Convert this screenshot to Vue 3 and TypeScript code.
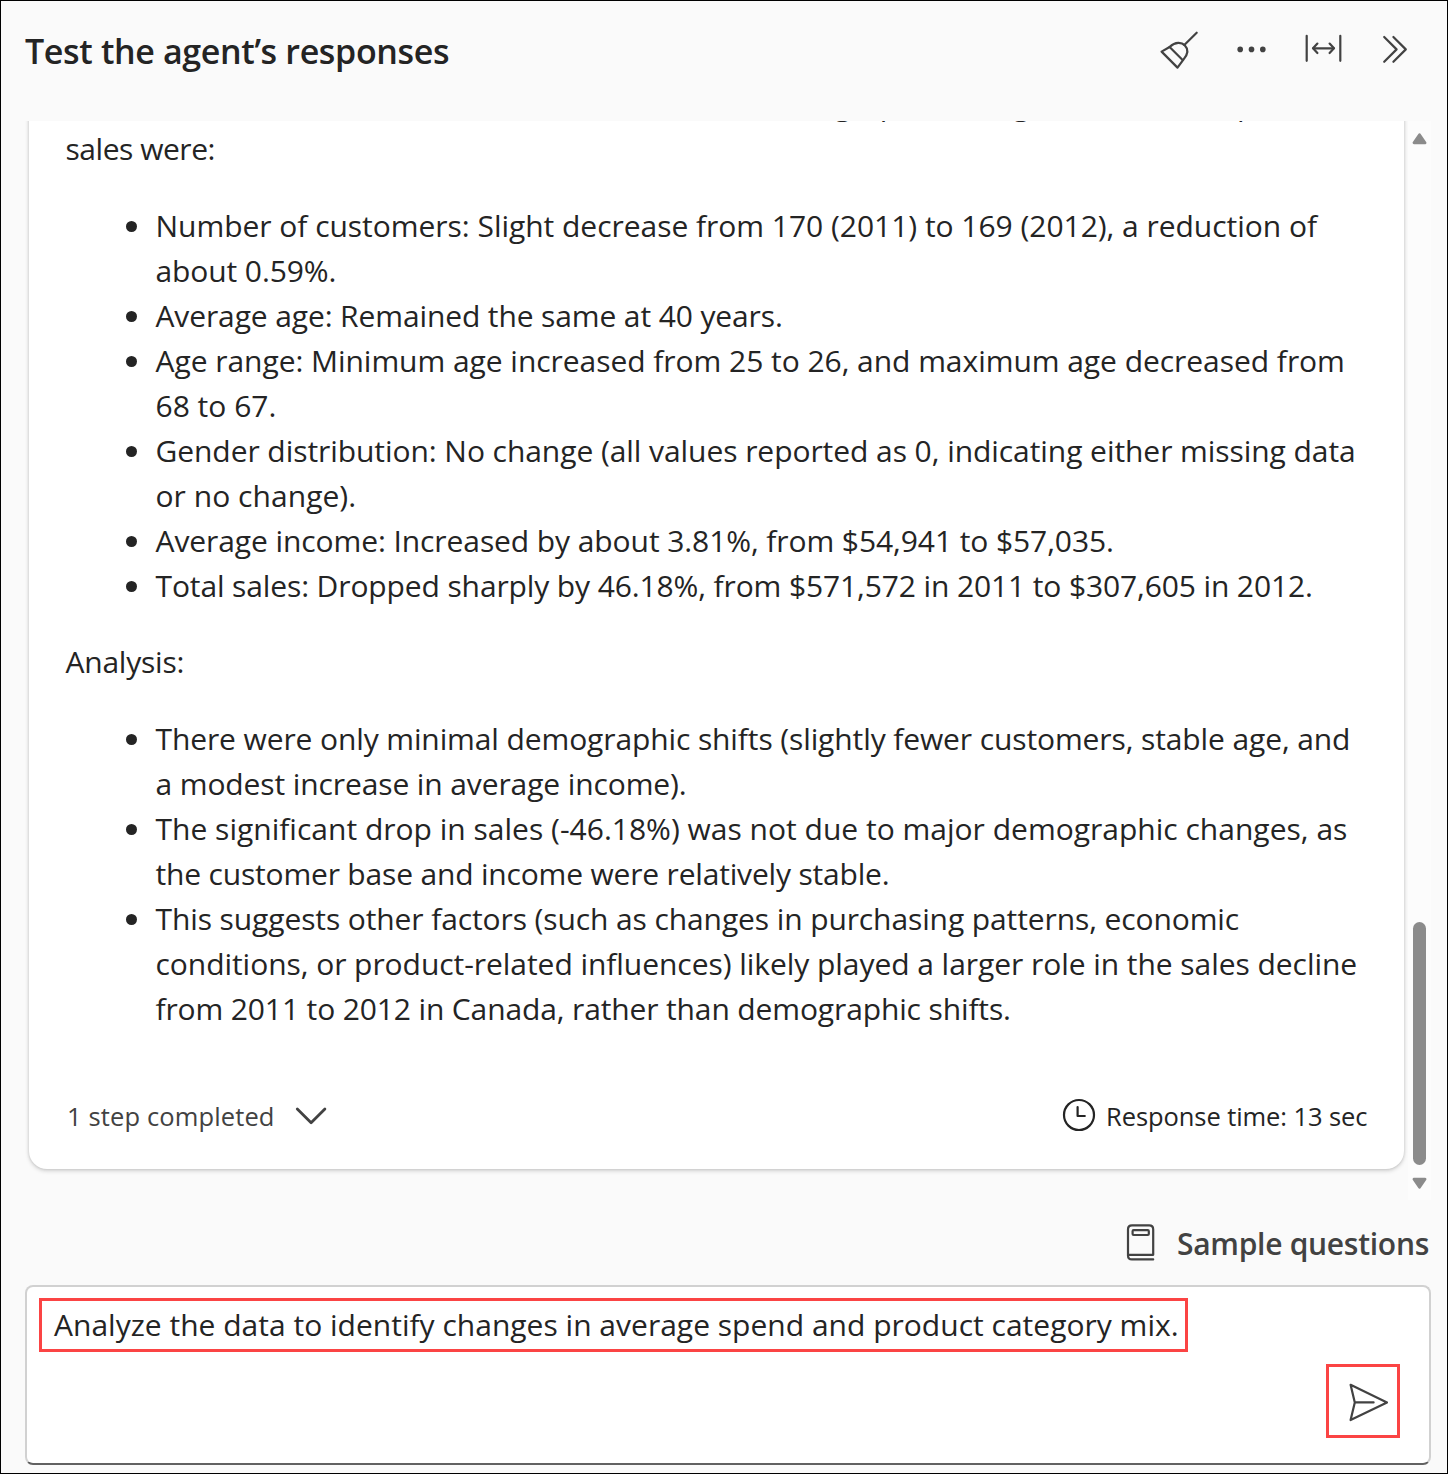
<script setup lang="ts">
interface Line {
  text: string
  spacing: number
}

type Item = Line[]

const intro: Line[] = [
  { text: 'Between 2011 and 2012 in Canada, the customer demographic changes and their impact on', spacing: -0.1 },
  { text: 'sales were:', spacing: -0.467 },
]

const findings: Item[] = [
  [
    { text: 'Number of customers: Slight decrease from 170 (2011) to 169 (2012), a reduction of', spacing: -0.03 },
    { text: 'about 0.59%.', spacing: -0.1 },
  ],
  [{ text: 'Average age: Remained the same at 40 years.', spacing: -0.118 }],
  [
    { text: 'Age range: Minimum age increased from 25 to 26, and maximum age decreased from', spacing: -0.045 },
    { text: '68 to 67.', spacing: 0.008 },
  ],
  [
    { text: 'Gender distribution: No change (all values reported as 0, indicating either missing data', spacing: -0.064 },
    { text: 'or no change).', spacing: 0.045 },
  ],
  [{ text: 'Average income: Increased by about 3.81%, from $54,941 to $57,035.', spacing: -0.085 }],
  [{ text: 'Total sales: Dropped sharply by 46.18%, from $571,572 in 2011 to $307,605 in 2012.', spacing: -0.119 }],
]

const analysis: Item[] = [
  [
    { text: 'There were only minimal demographic shifts (slightly fewer customers, stable age, and', spacing: -0.11 },
    { text: 'a modest increase in average income).', spacing: -0.11 },
  ],
  [
    { text: 'The significant drop in sales (-46.18%) was not due to major demographic changes, as', spacing: 0.007 },
    { text: 'the customer base and income were relatively stable.', spacing: -0.18 },
  ],
  [
    { text: 'This suggests other factors (such as changes in purchasing patterns, economic', spacing: -0.106 },
    { text: 'conditions, or product-related influences) likely played a larger role in the sales decline', spacing: -0.053 },
    { text: 'from 2011 to 2012 in Canada, rather than demographic shifts.', spacing: -0.13 },
  ],
]

const track = (line: Line) => ({ letterSpacing: `${line.spacing}px` })
</script>

<template>
  <main class="panel">
    <header class="header">
      <h1 class="title">Test the agent’s responses</h1>
      <div class="tools">
        <svg class="icon" width="42" height="42" viewBox="1158 29 42 42">
          <path d="M1196.7 32.7 L1184.3 45" />
          <path d="M1161.6 51.6 L1169.6 47 C1175.5 41.4 1181.6 42.2 1184.9 45.4 C1188.6 49.2 1188 54 1183.6 59.4 L1177.5 67.6 Z" />
          <path d="M1169.6 47 L1182.6 60" />
        </svg>
        <svg class="icon dots" width="42" height="42" viewBox="1230 29 42 42">
          <circle cx="1240.2" cy="49.4" r="2.8" />
          <circle cx="1251.5" cy="49.4" r="2.8" />
          <circle cx="1262.8" cy="49.4" r="2.8" />
        </svg>
        <svg class="icon" width="42" height="42" viewBox="1302 29 42 42">
          <path d="M1306.7 35.8 V60.8 M1340.3 35.8 V60.8 M1313.3 48.3 H1333.7" />
          <path d="M1317.4 43.6 L1313 48.3 L1317.4 53 M1329.6 43.6 L1334 48.3 L1329.6 53" />
        </svg>
        <svg class="icon" width="42" height="42" viewBox="1374 29 42 42">
          <path d="M1384.2 37 L1396.6 49.4 L1384.2 61.8 M1393.4 37 L1405.8 49.4 L1393.4 61.8" />
        </svg>
      </div>
    </header>

    <section class="viewport">
      <article class="card">
        <p class="para">
          <span v-for="line in intro" :key="line.text" class="line" :style="track(line)">{{ line.text }}</span>
        </p>
        <ul class="list">
          <li v-for="(item, i) in findings" :key="i" class="item">
            <span v-for="line in item" :key="line.text" class="line" :style="track(line)">{{ line.text }}</span>
          </li>
        </ul>
        <p class="para lead">Analysis:</p>
        <ul class="list">
          <li v-for="(item, i) in analysis" :key="i" class="item">
            <span v-for="line in item" :key="line.text" class="line" :style="track(line)">{{ line.text }}</span>
          </li>
        </ul>
        <footer class="meta">
          <button class="steps" type="button">
            <span>1 step completed</span>
            <svg width="32" height="20" viewBox="294.5 1106 32 20">
              <path d="M296.8 1109 L310.6 1122.8 L324.4 1109" />
            </svg>
          </button>
          <div class="timing">
            <svg width="34" height="34" viewBox="1062 1098 34 34">
              <circle cx="1079" cy="1115" r="15" />
              <path d="M1077.6 1107 V1116 H1084.8" />
            </svg>
            <span>Response time: 13 sec</span>
          </div>
        </footer>
      </article>
      <div class="scrollbar">
        <svg width="15" height="12" viewBox="0 0 15 12"><path d="M7.5 1.7 L13 9.8 H2 Z" /></svg>
        <div class="thumb"></div>
        <svg width="15" height="12" viewBox="0 0 15 12"><path d="M7.5 10.3 L13 2.2 H2 Z" /></svg>
      </div>
    </section>

    <div class="samples">
      <svg width="30" height="38" viewBox="1126 1223 30 38">
        <path d="M1153.2 1259.4 H1132 Q1128 1259.4 1128 1255.4 V1229.4 Q1128 1225.4 1132 1225.4 H1149.2 Q1153.2 1225.4 1153.2 1229.4 V1254.8 H1128" />
        <rect x="1132.6" y="1230.2" width="16.2" height="4.8" rx="1" />
      </svg>
      <span>Sample questions</span>
    </div>

    <div class="composer">
      <div class="prompt">Analyze the data to identify changes in average spend and product category mix.</div>
      <button class="send" type="button" aria-label="Send">
        <svg width="42" height="42" viewBox="1347 1382 42 42">
          <path d="M1350.6 1384.8 L1387 1402.4 L1350.6 1420 L1354.8 1402.4 Z M1354.8 1402.4 H1373.6" />
        </svg>
      </button>
    </div>
  </main>
</template>

<style>
body {
  margin: 0;
}
</style>

<style scoped>
.panel {
  box-sizing: border-box;
  width: 1448px;
  height: 1474px;
  border: 1px solid #000;
  background: #fafafa;
  color: #242424;
  font-family: "Open Sans", "Noto Sans", sans-serif;
  font-size: 30px;
  line-height: 45px;
  overflow: hidden;
  display: flex;
  flex-direction: column;
}

svg {
  display: block;
  flex: none;
  fill: none;
  stroke: #424242;
  stroke-width: 2.2;
  stroke-linecap: round;
  stroke-linejoin: round;
}

button {
  padding: 0;
  border: 0;
  background: none;
  font: inherit;
  color: inherit;
}

.header {
  flex: none;
  height: 120px;
  box-sizing: border-box;
  padding: 28px 31px 0 24px;
  display: flex;
  justify-content: space-between;
  align-items: flex-start;
}

.title {
  margin: 0;
  font-size: 34px;
  font-weight: 600;
  line-height: 45px;
  letter-spacing: -0.35px;
}

.tools {
  display: flex;
  gap: 30px;
}

.icon.dots {
  fill: #424242;
  stroke: none;
}

.viewport {
  flex: none;
  height: 1079px;
  padding-left: 28px;
  overflow: hidden;
  display: flex;
  align-items: flex-start;
}

.card {
  box-sizing: border-box;
  width: 1375px;
  height: 1088px;
  margin-top: -40px;
  padding: 0 36.5px;
  border-radius: 0 0 18px 18px;
  background: #fff;
  box-shadow: 0 2px 4px rgba(0, 0, 0, 0.16), 0 0 3px rgba(0, 0, 0, 0.14);
}

.para {
  margin: 0;
}

.para.lead {
  margin-top: 31px;
  letter-spacing: -0.226px;
}

.line {
  display: block;
  white-space: nowrap;
}

.list {
  list-style: none;
  margin: 32px 0 0;
  padding: 0 0 0 60.5px;
}

.item {
  display: grid;
  grid-template-columns: 29.5px auto;
  justify-content: start;
}

.item::before {
  content: "";
  width: 11px;
  height: 11px;
  margin-top: 18px;
  border-radius: 50%;
  background: #242424;
}

.item .line {
  grid-column: 2;
}

.meta {
  margin: 64px 0 0;
  height: 43px;
  display: flex;
  justify-content: space-between;
  align-items: center;
  font-size: 25.5px;
}

.steps {
  display: flex;
  align-items: center;
  gap: 20px;
  margin-left: 1.5px;
  color: #424242;
  letter-spacing: 0.13px;
}

.steps svg {
  margin-bottom: 2px;
  stroke-width: 2.8;
}

.timing {
  display: flex;
  align-items: center;
  gap: 10px;
  letter-spacing: -0.08px;
}

.timing svg {
  margin-bottom: 4px;
  stroke: #242424;
}

.scrollbar {
  box-sizing: border-box;
  width: 23px;
  height: 1079px;
  margin-left: 4px;
  padding: 12px 0 11px;
  background: #fcfcfc;
  display: flex;
  flex-direction: column;
  align-items: center;
}

.scrollbar svg {
  fill: #8b8b8b;
  stroke: #8b8b8b;
  stroke-width: 2.8;
}

.thumb {
  width: 13px;
  height: 243px;
  margin: auto 0 12px;
  border-radius: 7px;
  background: #8b8b8b;
}

.samples {
  flex: none;
  box-sizing: border-box;
  height: 85px;
  padding: 2px 18px 0 0;
  display: flex;
  justify-content: flex-end;
  align-items: center;
  gap: 21px;
  color: #424242;
  font-weight: 600;
  letter-spacing: -0.28px;
}

.samples svg {
  margin-bottom: 4px;
}

.composer {
  flex: none;
  box-sizing: border-box;
  width: 1406px;
  height: 180px;
  margin-left: 24px;
  padding: 11px 29px 0 12px;
  border: 2px solid #d1d1d1;
  border-bottom-color: #616161;
  border-radius: 8px;
  background: #fff;
  display: flex;
  flex-direction: column;
  align-items: flex-start;
}

.prompt {
  box-sizing: border-box;
  width: 1149px;
  height: 54px;
  padding: 1px 0 0 12px;
  border: 3px solid #fb4444;
  letter-spacing: 0.01px;
  white-space: nowrap;
}

.send {
  box-sizing: border-box;
  width: 74px;
  height: 74px;
  margin-top: 12px;
  align-self: flex-end;
  padding: 4px 0 0 9px;
  border: 3px solid #fb4444;
  display: flex;
  justify-content: center;
  align-items: center;
}
</style>
